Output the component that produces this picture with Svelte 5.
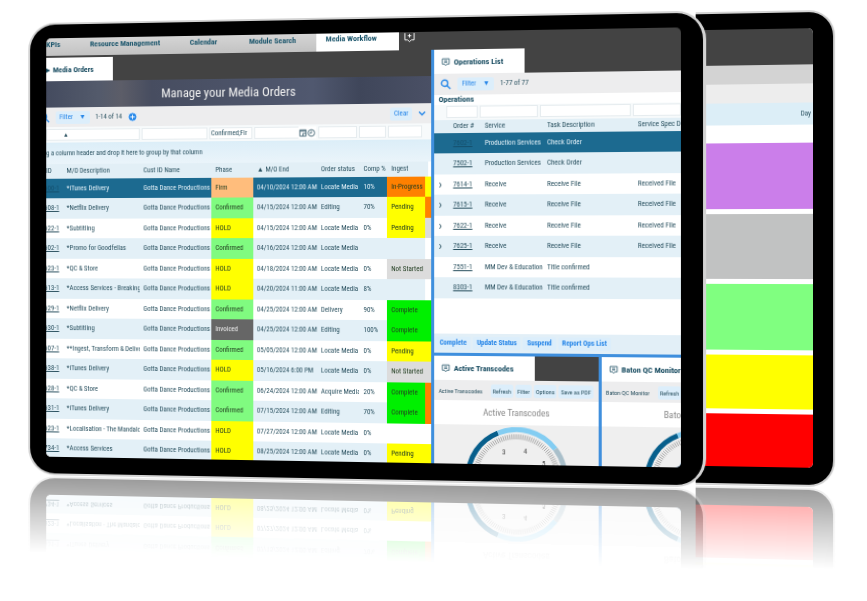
<script>
  const nav = ['KPIs', 'Resource Management', 'Calendar', 'Module Search'];

  // id, description, phase, end date, order status, completion, ingest, marker colour
  const orders = [
    ['600-1', '*iTunes Delivery', 'Firm', '04/10/2024 12:00 AM', 'Locate Media', '10%', 'In-Progress', 'yellow'],
    ['608-1', '*Netflix Delivery', 'Confirmed', '04/15/2024 12:00 AM', 'Editing', '70%', 'Pending', 'orange'],
    ['622-1', '*Subtitling', 'HOLD', '04/15/2024 12:00 AM', 'Locate Media', '0%', 'Pending', 'grey'],
    ['602-1', '*Promo for Goodfellas', 'Confirmed', '04/16/2024 12:00 AM', 'Locate Media', '', '', ''],
    ['623-1', '*QC & Store', 'HOLD', '04/18/2024 12:00 AM', 'Locate Media', '0%', 'Not Started', 'grey'],
    ['613-1', '*Access Services - Breaking B', 'HOLD', '04/20/2024 11:00 AM', 'Locate Media', '8%', '', ''],
    ['629-1', '*Netflix Delivery', 'Confirmed', '04/25/2024 12:00 AM', 'Delivery', '90%', 'Complete', 'green'],
    ['630-1', '*Subtitling', 'Invoiced', '04/25/2024 12:00 AM', 'Editing', '100%', 'Complete', 'green'],
    ['607-1', '**Ingest, Transform & Deliver', 'Confirmed', '05/05/2024 12:00 AM', 'Locate Media', '0%', 'Pending', 'yellow'],
    ['638-1', '*iTunes Delivery', 'HOLD', '05/16/2024 6:00 PM', 'Locate Media', '0%', 'Not Started', 'grey'],
    ['628-1', '*QC & Store', 'Confirmed', '06/24/2024 12:00 AM', 'Acquire Media', '20%', 'Complete', 'orange'],
    ['631-1', '*iTunes Delivery', 'Confirmed', '07/15/2024 12:00 AM', 'Editing', '70%', 'Complete', 'orange'],
    ['623-1', '*Localisation - The Mandalorian', 'HOLD', '07/27/2024 12:00 AM', 'Locate Media', '0%', '', ''],
    ['734-1', '*Access Services', 'HOLD', '08/25/2024 12:00 AM', 'Locate Media', '0%', 'Pending', 'yellow']
  ];

  const operations = [
    ['', '7602-1', 'Production Services', 'Check Order', ''],
    ['', '7502-1', 'Production Services', 'Check Order', ''],
    ['›', '7614-1', 'Receive', 'Receive File', 'Received File'],
    ['›', '7615-1', 'Receive', 'Receive File', 'Received File'],
    ['›', '7622-1', 'Receive', 'Receive File', 'Received File'],
    ['›', '7625-1', 'Receive', 'Receive File', 'Received File'],
    ['', '7551-1', 'MM Dev & Education', 'Title confirmed', ''],
    ['', '8303-1', 'MM Dev & Education', 'Title confirmed', '']
  ];

  const slug = (s) => s.toLowerCase().replace(' ', '-');

  const ticks = Array.from({ length: 61 }, (_, i) => {
    const a = Math.PI + (i / 60) * Math.PI;
    const c = Math.cos(a);
    const s = Math.sin(a);
    return `M${50 + 43 * c} ${50 + 43 * s}L${50 + 38 * c} ${50 + 38 * s}`;
  }).join('');
</script>

{#snippet badge()}
  <svg class="badge" viewBox="0 0 12 12" aria-hidden="true">
    <path d="M1.5 1.5h9v7h-3L6 10.5 4.5 8.5h-3z" />
    <path d="M4 4h4M4 6h4" />
  </svg>
{/snippet}

{#snippet magnifier()}
  <svg class="magnifier" viewBox="0 0 12 12" aria-hidden="true">
    <circle cx="4.8" cy="4.8" r="3.4" />
    <path d="M7.3 7.3l3.7 3.7" />
  </svg>
{/snippet}

{#snippet gauge()}
  <svg class="gauge" viewBox="0 0 100 50" role="img" aria-label="Transcode gauge">
    <path class="ticks" d={ticks} />
    <path d="M2.5 50A47.5 47.5 0 0 1 32 6" stroke="#075f8c" />
    <path d="M32 6A47.5 47.5 0 0 1 88 21" stroke="#83cdf2" />
    <path d="M88 21A47.5 47.5 0 0 1 97.5 50" stroke="#a9bfca" />
    <text x="36" y="27">3</text>
    <text x="57" y="26">4</text>
    <text x="75" y="38">5</text>
  </svg>
{/snippet}

<main class="scene">
  <section class="tablet front">
    <div class="screen">
      <nav class="nav">
        {#each nav as item}
          <a href="#top">{item}</a>
        {/each}
        <a class="current" href="#top">Media Workflow</a>
        <span class="add">
          <svg viewBox="0 0 12 12" aria-hidden="true"><path d="M1 1v7.500h3L6 10.500l2-2h3V1M6 2v4M4 4h4" /></svg>
        </span>
      </nav>

      <div class="panes">
        <section class="orders">
          <div class="tabs"><a class="tab" href="#top"><i>▸</i>Media Orders</a></div>
          <h1>Manage your Media Orders</h1>
          <div class="toolbar">
            {@render magnifier()}
            <button class="pill">Filter <i>▼</i></button>
            <span>1-14 of 14</span>
            <button class="plus" aria-label="Add order">
              <svg viewBox="0 0 10 10"><circle cx="5" cy="5" r="5" /><path d="M5 2.500v5M2.500 5h5" /></svg>
            </button>
            <button class="pill push">Clear</button>
            <svg class="chev" viewBox="0 0 8 8" aria-hidden="true"><path d="M1 2.500l3 3 3-3" /></svg>
          </div>
          <div class="filters">
            <input aria-label="Description" value="▴" />
            <input aria-label="Customer" />
            <input aria-label="Phase" value="Confirmed;Fir" />
            <div class="date">
              <input aria-label="End date" />
              <svg viewBox="0 0 20 10" aria-hidden="true">
                <path d="M1.500 1.500h7v7h-7zM1.500 3h7M5 8.500v-3h3.500" /><circle cx="14.500" cy="5" r="3.700" /><path d="M14.500 2.800v2.400h-2" />
              </svg>
            </div>
            <input aria-label="Order status" />
            <input aria-label="Completion" />
            <input aria-label="Ingest" />
          </div>
          <p class="group">g a column header and drop it here to group by that column</p>
          <table>
            <colgroup>
              <col style:width="4.500%" /><col style:width="20.500%" /><col style:width="19%" /><col style:width="10.900%" />
              <col style:width="16.600%" /><col style:width="10.900%" /><col style:width="7.100%" /><col />
            </colgroup>
            <thead>
              <tr>
                <th class="id">ID</th><th>M/O Description</th><th>Cust ID Name</th><th>Phase</th>
                <th>▲ M/O End</th><th>Order status</th><th>Comp %</th><th>Ingest</th>
              </tr>
            </thead>
            <tbody>
              {#each orders as [id, name, phase, end, status, comp, ingest, mark]}
                <tr>
                  <td class="id"><a href="#top">{id}</a></td>
                  <td>{name}</td>
                  <td>Gotta Dance Productions</td>
                  <td class="phase {slug(phase)}">{phase}</td>
                  <td>{end}</td>
                  <td>{status}</td>
                  <td>{comp}</td>
                  <td class="ingest {slug(ingest)} mark-{mark}">{ingest}</td>
                </tr>
              {/each}
            </tbody>
          </table>
        </section>

        <div class="side">
          <section class="operations">
            <div class="tabs"><a class="tab" href="#top">{@render badge()}Operations List</a></div>
            <div class="toolbar">
              {@render magnifier()}
              <button class="pill">Filter <i>▼</i></button>
              <span>1-77 of 77</span>
            </div>
            <h2>Operations</h2>
            <div class="filters">
              <input aria-label="Order number" /><input aria-label="Service" /><input aria-label="Task" /><input aria-label="Spec" />
            </div>
            <table>
              <colgroup>
                <col style:width="6%" /><col style:width="13%" /><col style:width="25.500%" /><col style:width="37.500%" /><col />
              </colgroup>
              <thead>
                <tr><th></th><th>Order #</th><th>Service</th><th>Task Description</th><th>Service Spec De</th></tr>
              </thead>
              <tbody>
                {#each operations as [mark, id, service, task, spec]}
                  <tr><td>{mark}</td><td><a href="#top">{id}</a></td><td>{service}</td><td>{task}</td><td>{spec}</td></tr>
                {/each}
              </tbody>
            </table>
            <div class="actions">
              <button>Complete</button><button>Update Status</button><button>Suspend</button><button>Report Ops List</button>
            </div>
          </section>

          <div class="monitors">
            <section class="monitor">
              <div class="tabs"><a class="tab" href="#top">{@render badge()}Active Transcodes</a></div>
              <div class="toolbar">
                <span>Active Transcodes</span>
                <button>Refresh</button><button>Filter</button><button>Options</button><button>Save as PDF</button>
              </div>
              <h3>Active Transcodes</h3>
              {@render gauge()}
            </section>
            <section class="monitor baton">
              <div class="tabs"><a class="tab" href="#top">{@render badge()}Baton QC Monitor</a></div>
              <div class="toolbar"><span>Baton QC Monitor</span><button>Refresh</button></div>
              <h3>Baton QC Monitor</h3>
              {@render gauge()}
            </section>
          </div>
        </div>
      </div>
    </div>
  </section>

  <section class="tablet back">
    <div class="screen">
      <div class="dark"></div>
      <div class="strip"></div>
      <div class="strip pale"></div>
      <div class="day">Day</div>
      <div class="slot purple"></div>
      <div class="slot silver"></div>
      <div class="slot lime"></div>
      <div class="slot sun"></div>
      <div class="slot red"></div>
    </div>
  </section>
</main>

<style>
  :global(body) {
    margin: 0;
    background: #fff;
  }
  .scene {
    display: flex;
    align-items: flex-start;
    padding: 11px 32px 112px 18px;
    overflow: hidden;
    font: 7px/9px 'Roboto Condensed', 'Liberation Sans Narrow', Roboto, sans-serif;
    color: #29505f;
  }
  .scene * {
    box-sizing: border-box;
  }
  .tablet {
    display: flex;
    background: #000;
    border: 2px solid #d3d3d3;
    transform: perspective(1090px) rotateY(-5deg);
    -webkit-box-reflect: below 1px linear-gradient(transparent 83%, rgba(0, 0, 0, 0.2) 92%, rgba(0, 0, 0, 0.4));
  }
  .front {
    position: relative;
    z-index: 1;
    flex: 1;
    min-width: 0;
    height: 464px;
    margin-top: 6px;
    padding: 14px 21px 17px 17px;
    border-right-width: 3px;
    border-radius: 28px;
  }
  .back {
    width: 140px;
    height: 475px;
    margin-left: -3px;
    padding: 16px 20px 17px 0;
    border-left: 0;
    border-radius: 0 26px 26px 0;
  }
  .screen {
    flex: 1;
    min-width: 0;
    display: flex;
    flex-direction: column;
    overflow: hidden;
    border-radius: 5px;
    background: #434343;
  }
  a {
    color: inherit;
    text-decoration: none;
  }
  i {
    font-style: normal;
  }
  button {
    font: inherit;
    color: #2585e8;
    background: #dceefb;
    border: 0;
    border-radius: 2px;
    padding: 2px 4px;
    white-space: nowrap;
  }
  input {
    min-width: 0;
    width: 100%;
    height: 12px;
    padding: 0 1px;
    border: 1px solid #e6ecef;
    background: #fff;
    font: inherit;
    color: inherit;
  }
  .nav {
    flex: none;
    display: grid;
    grid-template-columns: 46fr 104fr 61fr 68fr 84fr 275fr;
    height: 18px;
    font-size: 8px;
    font-weight: 700;
    color: #1c566c;
    line-height: 13px;
  }
  .nav a {
    background: linear-gradient(#d5d5d5, #c2c2c2);
    white-space: nowrap;
  }
  .nav .current {
    background: #fff;
    padding-left: 10px;
    line-height: 12px;
  }
  .add {
    padding-left: 4px;
  }
  .add svg {
    display: block;
    width: 13px;
    height: 11px;
    fill: none;
    stroke: #fff;
  }
  .panes {
    flex: 1;
    min-height: 0;
    display: grid;
    grid-template-columns: 395fr 243fr;
  }
  .orders {
    min-width: 0;
    overflow: hidden;
    background: #fff;
  }
  .tabs {
    display: flex;
    height: 24px;
    background: #434343;
  }
  .tab {
    display: flex;
    align-items: center;
    gap: 3px;
    padding: 0 21px 0 7px;
    background: #fff;
    font-size: 8px;
    font-weight: 700;
    color: #164a5f;
    white-space: nowrap;
  }
  .orders .tabs {
    height: 26px;
    padding-top: 2px;
  }
  .orders .tab {
    padding: 0 20px 0 0;
  }
  h1 {
    height: 27px;
    margin: 0;
    background: linear-gradient(90deg, #444b5f, #535a6b 14%, #5c5d68 20%, #474d60 28%, #50586f 70%, #3f465a 82%, #4a5065);
    color: #f0f0f0;
    font-size: 13px;
    font-weight: 400;
    line-height: 27px;
    text-align: center;
    text-indent: -16px;
  }
  .toolbar {
    display: flex;
    align-items: center;
    gap: 6px;
    height: 21px;
    padding-left: 6px;
    background: #ededee;
    white-space: nowrap;
  }
  .orders .toolbar {
    height: 20px;
    padding: 0 5px 0 0;
  }
  .orders .magnifier {
    margin-left: -7px;
  }
  .magnifier {
    width: 11px;
    height: 11px;
    fill: none;
    stroke: #2d8be9;
    stroke-width: 1.5;
  }
  .pill i {
    margin-left: 5px;
  }
  .push {
    margin-left: auto;
  }
  .plus {
    padding: 0;
    background: none;
  }
  .plus svg {
    display: block;
    width: 9px;
    height: 9px;
    fill: #2d8be9;
    stroke: #fff;
  }
  .chev {
    width: 8px;
    height: 8px;
    fill: none;
    stroke: #2d8be9;
    stroke-width: 1.5;
  }
  .filters {
    display: grid;
    gap: 2px;
    padding: 2px 0;
    background: #f7fafb;
  }
  .orders .filters {
    grid-template-columns: 98fr 68fr 44fr 63fr 40fr 27fr 34fr;
    height: 16px;
    padding-right: 9px;
  }
  .date {
    display: flex;
    align-items: center;
    background: #fff;
  }
  .date svg {
    flex: none;
    width: 18px;
    height: 9px;
    fill: none;
    stroke: #3d6170;
  }
  .date input {
    flex: 1;
    border-right: 0;
  }
  .orders .filters input:first-child {
    padding-left: 18px;
  }
  .orders .filters .date input {
    padding-left: 1px;
  }
  .group {
    height: 22px;
    margin: 0;
    background: linear-gradient(#dceef8, #eaf4fa);
    line-height: 22px;
  }
  table {
    width: 100%;
    table-layout: fixed;
    border-collapse: collapse;
    background: #fff;
  }
  th,
  td {
    padding: 0 0 0 4px;
    height: 20px;
    overflow: hidden;
    white-space: nowrap;
    text-align: left;
    font-weight: 400;
  }
  th {
    height: 15px;
    background: #e2eff6;
  }
  tbody tr:nth-child(even) td {
    height: 21px;
  }
  tbody tr:nth-child(even) {
    background: #e3f0f7;
  }
  tbody tr:first-child {
    background: #1c6a90;
    color: #e3f0f7;
  }
  td a {
    text-decoration: underline;
  }
  tbody tr:first-child a {
    color: #144f6c;
  }
  .id {
    padding: 0 4px 0 0;
    direction: rtl;
  }
  th.id {
    direction: ltr;
  }
  .operations th {
    height: 13px;
  }
  .operations th:last-child,
  .operations td:last-child {
    padding-left: 2px;
  }
  .phase,
  .ingest {
    color: #223d20;
  }
  .firm {
    background: #ffbd7c;
  }
  .confirmed {
    background: #80fb80;
  }
  .hold,
  .pending {
    background: #ff0;
  }
  .invoiced {
    background: #666;
    color: #eee;
  }
  .in-progress {
    background: #ff8000;
  }
  .not-started {
    background: #dcdcdc;
  }
  .complete {
    background: #00f000;
  }
  .ingest {
    border-right: 6px solid transparent;
  }
  .mark-yellow {
    border-right-color: #ff0;
  }
  .mark-orange {
    border-right-color: #ff8000;
  }
  .mark-grey {
    border-right-color: #dcdcdc;
  }
  .mark-green {
    border-right-color: #00f000;
  }
  .side {
    min-width: 0;
    display: flex;
    flex-direction: column;
    border-left: 3px solid #3f8fdd;
    background: #3f8fdd;
    overflow: hidden;
  }
  .operations {
    background: #fff;
  }
  .badge {
    width: 9px;
    height: 9px;
    fill: none;
    stroke: #164a5f;
  }
  h2 {
    height: 10px;
    margin: 0;
    padding-left: 4px;
    font-size: 8px;
    line-height: 10px;
    color: #164a5f;
  }
  .operations .filters {
    grid-template-columns: 31fr 57fr 88fr 46fr;
    padding: 1px 0 2px 12px;
  }
  .operations td:first-child {
    font-size: 12px;
  }
  .actions {
    display: flex;
    align-items: center;
    gap: 2px;
    height: 19px;
    margin-top: 35px;
    padding-left: 1px;
    background: #e2eff7;
    font-weight: 700;
  }
  .monitors {
    flex: 1;
    display: grid;
    grid-template-columns: 161fr 76fr;
    gap: 3px;
    margin-top: 3px;
  }
  .monitor {
    min-width: 0;
    overflow: hidden;
    background: #efefef;
  }
  .monitor .toolbar {
    height: 20px;
    gap: 2px;
    padding-left: 4px;
    font-size: 6px;
  }
  .monitor button {
    padding: 2px;
    color: #29505f;
  }
  .monitor .toolbar span {
    margin-right: 6px;
  }
  h3 {
    height: 24px;
    margin: 0;
    background: #fff;
    color: #888;
    font-size: 9px;
    font-weight: 400;
    line-height: 24px;
    text-align: center;
  }
  .baton > * {
    width: 182px;
  }
  .gauge {
    display: block;
    width: 100px;
    height: 50px;
    margin: 2px auto 0;
    fill: none;
    stroke-width: 5;
  }
  .baton .gauge {
    width: 100px;
    margin-left: 41px;
  }
  .ticks {
    stroke: #aaa;
    stroke-width: 1;
  }
  .gauge text {
    fill: #444;
    font-size: 7px;
  }
  .back .screen {
    background: #fff;
    border-radius: 0 5px 5px 0;
  }
  .dark {
    flex: 36;
    background: #434343;
  }
  .strip {
    flex: 19;
    background: #d3d3d3;
  }
  .pale {
    background: #ededed;
  }
  .day {
    flex: 22;
    margin-bottom: 18px;
    padding-right: 2px;
    background: #dceef7;
    line-height: 22px;
    text-align: right;
  }
  .slot {
    flex: 66;
    margin-bottom: 5px;
  }
  .purple {
    background: #cb7eea;
  }
  .silver {
    background: #c1c2c2;
  }
  .lime {
    background: #80ff80;
  }
  .sun {
    flex: 54;
    background: #ff0;
  }
  .red {
    flex: 53;
    margin-bottom: 0;
    background: #f00;
  }
</style>
